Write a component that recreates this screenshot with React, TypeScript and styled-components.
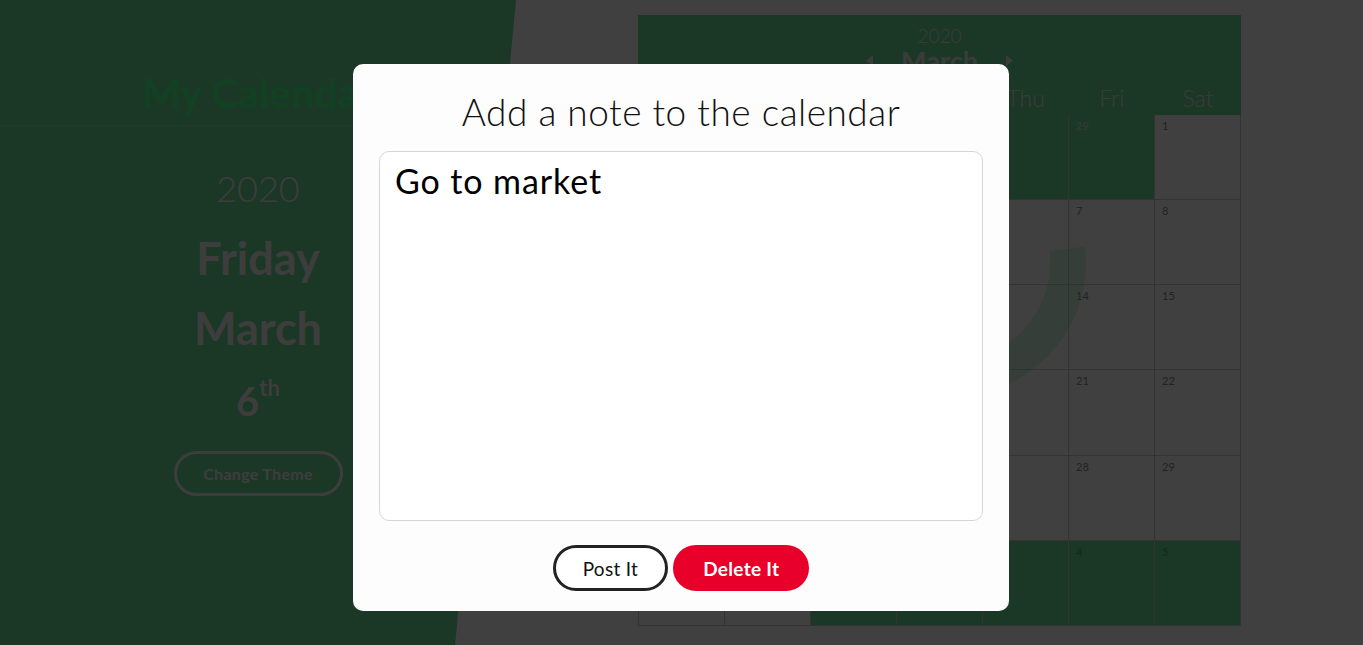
import styled, { createGlobalStyle } from "styled-components";
import { useState } from "react";

const GlobalStyle = createGlobalStyle`
html, body {
  margin: 0;
  padding: 0;
  height: 100%;
}
body {
  font-family: "Lato", "Open Sans", sans-serif;
  overflow: hidden;
}
* { box-sizing: border-box; }
`;

const GREEN = "#6cdc98";

const Page = styled.div`
display: flex;
height: 100vh;
background: #ffffff;
`;

const SidePanel = styled.aside`
width: 516px;
flex-shrink: 0;
background: ${GREEN};
clip-path: polygon(0 0, 100% 0, 88.2% 100%, 0 100%);
display: flex;
flex-direction: column;
align-items: center;
color: #f4f4f4;
`;

const AppTitle = styled.h1`
margin: 0;
width: 100%;
padding: 68px 0 8px;
text-align: center;
font-size: 41px;
font-weight: 700;
color: #48ff8c;
border-bottom: 1px solid rgba(255, 255, 255, 0.22);
`;

const DateBlock = styled.div`
display: flex;
flex-direction: column;
align-items: center;
padding-top: 44px;
`;

const YearText = styled.div`
font-size: 36px;
font-weight: 300;
line-height: 1;
`;

const BigLine = styled.div<{ $gap: number }>`
font-size: 45px;
font-weight: 700;
line-height: 1;
margin-top: ${(p) => p.$gap}px;
`;

const DayNum = styled.div`
font-size: 40px;
font-weight: 700;
line-height: 1;
margin-top: 30px;
sup {
  font-size: 22px;
  vertical-align: top;
  position: relative;
  top: -4px;
}
`;

const ThemeButton = styled.button`
margin-top: 30px;
width: 169px;
height: 45px;
border: 3px solid #f4f4f4;
border-radius: 23px;
background: transparent;
color: #f4f4f4;
font-family: inherit;
font-size: 16px;
font-weight: 700;
letter-spacing: 0.3px;
`;

const Main = styled.main`
flex: 1;
display: flex;
justify-content: center;
padding-top: 15px;
`;

const Calendar = styled.section`
position: relative;
width: 603px;
height: 611px;
display: flex;
flex-direction: column;
`;

const CalHeader = styled.header`
height: 100px;
background: ${GREEN};
color: #eaeaea;
display: flex;
flex-direction: column;
align-items: center;
padding-top: 11px;
`;

const CalYear = styled.div`
font-size: 19px;
font-weight: 300;
line-height: 1;
`;

const MonthNav = styled.div`
display: flex;
align-items: center;
gap: 28px;
margin-top: 1px;
`;

const MonthName = styled.div`
font-size: 27px;
font-weight: 700;
line-height: 1.1;
`;

const Arrow = styled.svg`
width: 7px;
height: 11px;
fill: #eaeaea;
`;

const WeekRow = styled.div`
display: grid;
grid-template-columns: repeat(7, 1fr);
width: 100%;
margin-top: auto;
padding-bottom: 5px;
`;

const WeekDay = styled.div`
text-align: center;
font-size: 23px;
font-weight: 300;
line-height: 1.05;
`;

const Grid = styled.div`
flex: 1;
display: grid;
grid-template-columns: repeat(7, 1fr);
grid-template-rows: repeat(6, 1fr);
border-left: 1px solid #cccccc;
`;

const Cell = styled.div<{ $kind: "prev" | "cur" | "next" }>`
background: ${(p) => (p.$kind === "cur" ? "#ffffff" : GREEN)};
border-right: 1px solid #cccccc;
border-bottom: 1px solid #cccccc;
padding: 5px 7px;
font-size: 11px;
line-height: 1.1;
font-weight: ${(p) => (p.$kind === "cur" ? 400 : 700)};
color: ${(p) =>
  p.$kind === "cur" ? "#8a8a8a" : p.$kind === "prev" ? "rgba(255,255,255,0.55)" : "rgba(0,0,0,0.22)"};
`;

const Ring = styled.div`
position: absolute;
left: 182px;
top: 115px;
width: 266px;
height: 266px;
border-radius: 50%;
border: 36px solid transparent;
border-right-color: rgba(108, 220, 152, 0.28);
border-bottom-color: rgba(108, 220, 152, 0.28);
transform: rotate(38deg);
pointer-events: none;
`;

const Backdrop = styled.div`
position: fixed;
inset: 0;
background: rgba(0, 0, 0, 0.75);
display: flex;
justify-content: center;
align-items: flex-start;
padding: 64px 1px 0 0;
`;

const Modal = styled.div`
width: 656px;
height: 547px;
background: #fdfdfd;
border-radius: 10px;
padding: 26px 26px 20px;
display: flex;
flex-direction: column;
align-items: center;
`;

const ModalTitle = styled.h2`
margin: 0 0 18px;
font-size: 37px;
font-weight: 300;
line-height: 43px;
color: #111;
letter-spacing: 0.5px;
`;

const NoteArea = styled.textarea`
width: 604px;
height: 370px;
border: 1px solid #d6d6d6;
border-radius: 10px;
background: #ffffff;
padding: 8px 15px;
font-family: inherit;
font-size: 34px;
font-weight: 400;
letter-spacing: 0.9px;
color: #000;
resize: none;
outline: none;
`;

const ButtonRow = styled.div`
display: flex;
gap: 5px;
margin-top: 24px;
`;

const PillButton = styled.button<{ $danger?: boolean }>`
height: 46px;
padding: 0 27px;
border-radius: 23px;
border: 3px solid ${(p) => (p.$danger ? "#e8002a" : "#222")};
background: ${(p) => (p.$danger ? "#e8002a" : "#fff")};
color: ${(p) => (p.$danger ? "#fff" : "#111")};
font-family: inherit;
font-size: 19px;
font-weight: ${(p) => (p.$danger ? 700 : 400)};
letter-spacing: 0.3px;
`;

const WEEKDAYS = ["Sun", "Mon", "Tue", "Wed", "Thu", "Fri", "Sat"];

type Day = { n: number; kind: "prev" | "cur" | "next" };

function buildDays(): Day[] {
  const days: Day[] = [];
  for (let i = 24; i <= 29; i++) days.push({ n: i, kind: "prev" });
  for (let i = 1; i <= 31; i++) days.push({ n: i, kind: "cur" });
  for (let i = 1; i <= 5; i++) days.push({ n: i, kind: "next" });
  return days;
}

export default function App() {
  const [note, setNote] = useState("Go to market");
  const days = buildDays();

  return (
    <>
      <GlobalStyle />
      <Page>
        <SidePanel>
          <AppTitle>My Calendar</AppTitle>
          <DateBlock>
            <YearText>2020</YearText>
            <BigLine $gap={30}>Friday</BigLine>
            <BigLine $gap={25}>March</BigLine>
            <DayNum>
              6<sup>th</sup>
            </DayNum>
            <ThemeButton>Change Theme</ThemeButton>
          </DateBlock>
        </SidePanel>
        <Main>
          <Calendar>
            <CalHeader>
              <CalYear>2020</CalYear>
              <MonthNav>
                <Arrow viewBox="0 0 7 11">
                  <polygon points="7,0 0,5.5 7,11" />
                </Arrow>
                <MonthName>March</MonthName>
                <Arrow viewBox="0 0 7 11">
                  <polygon points="0,0 7,5.5 0,11" />
                </Arrow>
              </MonthNav>
              <WeekRow>
                {WEEKDAYS.map((d) => (
                  <WeekDay key={d}>{d}</WeekDay>
                ))}
              </WeekRow>
            </CalHeader>
            <Grid>
              {days.map((d, i) => (
                <Cell key={i} $kind={d.kind}>
                  {d.n}
                </Cell>
              ))}
            </Grid>
            <Ring />
          </Calendar>
        </Main>
      </Page>
      <Backdrop>
        <Modal>
          <ModalTitle>Add a note to the calendar</ModalTitle>
          <NoteArea value={note} onChange={(e) => setNote(e.target.value)} />
          <ButtonRow>
            <PillButton>Post It</PillButton>
            <PillButton $danger>Delete It</PillButton>
          </ButtonRow>
        </Modal>
      </Backdrop>
    </>
  );
}
